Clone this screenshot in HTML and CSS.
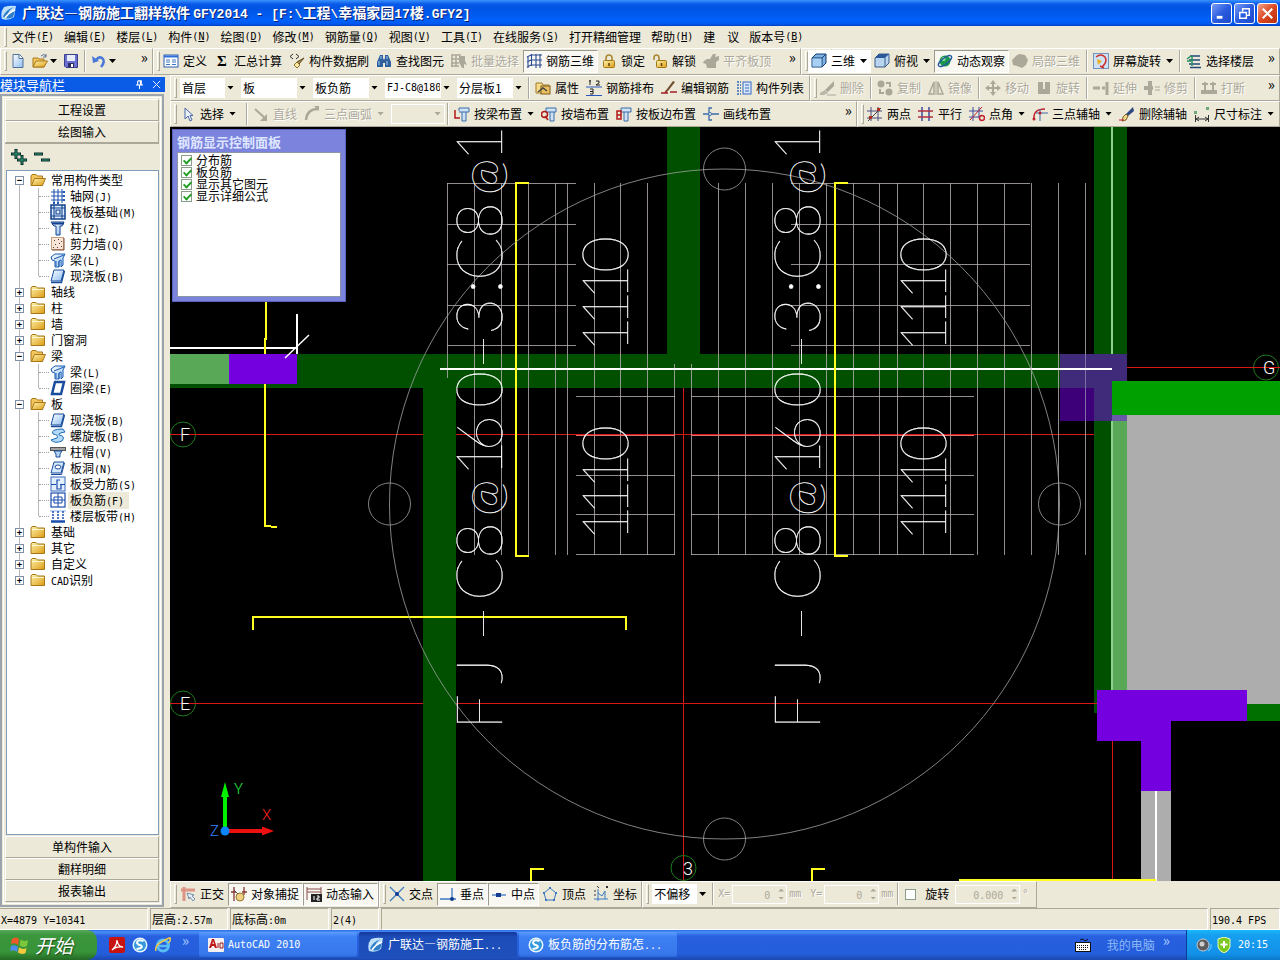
FILE: index.html
```html
<!DOCTYPE html>
<html lang="zh-CN">
<head>
<meta charset="utf-8">
<title>广联达—钢筋施工翻样软件 GFY2014</title>
<link rel="stylesheet" href="styles.css">
</head>
<body>
<svg class="sprite" aria-hidden="true">
  <defs>
    <linearGradient id="gold" x1="0" y1="0" x2="1" y2="1"><stop offset="0" stop-color="#fff3b0"/><stop offset="1" stop-color="#dc9c12"/></linearGradient>
    <linearGradient id="ice" x1="0" y1="0" x2="1" y2="1"><stop offset="0" stop-color="#ffffff"/><stop offset="1" stop-color="#8dbcf0"/></linearGradient>
  </defs>
  <symbol id="logo" viewBox="0 0 16 16"><path d="M3 2Q9 0 15 1L13 12Q8 16 1 14Q-1 7 3 2Z" fill="#bfe0f8"/><path d="M2 12Q4 5 13 2Q8 5 7 9L14 6L12 12Q7 15 2 12Z" fill="#2e7fc8"/><path d="M4 13Q7 8 14 5" fill="none" stroke="#fff" stroke-width="1.6"/></symbol>
  <symbol id="new" viewBox="0 0 16 16"><path d="M3 1.500H9.500L13 5V14.500H3Z" fill="url(#ice)" stroke="#51719c"/><path d="M9 2V5.500H13" fill="#fff" stroke="#51719c"/></symbol>
  <symbol id="open" viewBox="0 0 16 16"><path d="M1 5H6L7 6H12V14H1Z" fill="#f5c75b" stroke="#a8781c"/><path d="M1 14L4 8H15.500L12 14Z" fill="url(#gold)" stroke="#a8781c"/><path d="M9 3Q12 0 14 3M14 1V4H11" fill="none" stroke="#5a6f8c"/></symbol>
  <symbol id="save" viewBox="0 0 16 16"><path d="M1.500 1.500H14.500V14.500H3L1.500 13Z" fill="#6a6fd0" stroke="#3a3c8c"/><rect x="4" y="2" width="8" height="6" fill="#e6ecfa"/><rect x="5" y="10" width="6" height="4" fill="#2b2c60"/><rect x="8" y="11" width="2" height="3" fill="#fff"/></symbol>
  <symbol id="undo" viewBox="0 0 16 16"><path d="M5 7Q8 3 11 5Q15 8 10 14" fill="none" stroke="#4a78d8" stroke-width="2.500"/><path d="M1 3L2 10L8 8Z" fill="#4a78d8"/></symbol>
  <symbol id="define" viewBox="0 0 16 16"><rect x="1" y="2" width="14" height="12" fill="#fff" stroke="#2f5fae"/><path d="M1 3.500H15" stroke="#2f6fd8" stroke-width="2"/><path d="M3 7H7M3 9H7M3 11.500H7M9 7H13M9 9H13M9 11.500H13" stroke="#3d78c8"/></symbol>
  <symbol id="brush" viewBox="0 0 16 16"><path d="M4 1L1 3.500L4 6M7 1L10 3.500L7 6" fill="none" stroke="#333"/><path d="M15 5L10 11L8 9Z" fill="#b09050" stroke="#5c4820"/><path d="M8 9L11 12L8 15L5 12Z" fill="#f8e8a0" stroke="#8c7028"/></symbol>
  <symbol id="find" viewBox="0 0 16 16"><path d="M4 2H7V5L8 7L9 5V2H12L15 9V14H9V10H7V14H1V9Z" fill="#2f5f9c"/><path d="M3 8V12M11 8V12M5 3V6M11 3V6" stroke="#a8d0f4"/></symbol>
  <symbol id="batch" viewBox="0 0 16 16"><path d="M0 2H10M0 6H8M0 10H8M0 13H8M1 2V14M5 2V14" fill="none" stroke="#aca899" stroke-width="1.500"/><path d="M8 3H14V8L16 12L13 11V15H11L8 9Z" fill="#aca899"/></symbol>
  <symbol id="mesh" viewBox="0 0 16 16"><path d="M1 4L5 2H16M1 9L5 7H16M1 14L5 12H16M2 3V15M5.500 1V13M10 1V15M14 1V15" fill="none" stroke="#2a4c90" stroke-width="1.100"/></symbol>
  <symbol id="lock" viewBox="0 0 16 16"><path d="M5 8V5Q5 2 8 2T11 5V8" fill="none" stroke="#a88830" stroke-width="1.600"/><rect x="2.500" y="7.500" width="11" height="7" rx="1" fill="url(#gold)" stroke="#a07818"/><path d="M8 10V13" stroke="#604000" stroke-width="1.500"/></symbol>
  <symbol id="unlock" viewBox="0 0 16 16"><path d="M2 7V5Q2 2 4.500 2T7 5V8" fill="none" stroke="#a88830" stroke-width="1.600"/><rect x="4.500" y="7.500" width="10" height="7" rx="1" fill="url(#gold)" stroke="#a07818"/><path d="M9.500 10V13" stroke="#604000" stroke-width="1.500"/></symbol>
  <symbol id="blob" viewBox="0 0 16 16"><path d="M1 8L4 6L7 6L10 1H13L12 4L16 3V7L13 9V15H4L3 11L0 10Z" fill="#aca899"/></symbol>
  <symbol id="cube" viewBox="0 0 16 16"><path d="M1 5L5 1H15V10L11 14H1Z" fill="#7fb2e4" stroke="#173c70"/><path d="M1 5H11V14M11 5L15 1" fill="none" stroke="#173c70"/><rect x="1.500" y="5.500" width="9" height="8" fill="#a8d0f4"/></symbol>
  <symbol id="topview" viewBox="0 0 16 16"><path d="M1 5L5 1H15V10L11 14H1Z" fill="#b8d4ee" stroke="#3c5c88"/><path d="M1 5L5 1H15L11 5Z" fill="#2a5898"/><path d="M11 5V14" stroke="#3c5c88"/></symbol>
  <symbol id="orbit" viewBox="0 0 16 16"><circle cx="8" cy="8" r="5.500" fill="#1b9a4a"/><circle cx="6.500" cy="6" r="2" fill="#9be8b0"/><ellipse cx="8" cy="8" rx="8" ry="3" fill="none" stroke="#265c9c" stroke-width="1.300" transform="rotate(-38 8 8)"/></symbol>
  <symbol id="part" viewBox="0 0 16 16"><path d="M5 2L8 1L13 2L16 7L14 12L10 15L5 13L1 12L0 7Z" fill="#aca899"/></symbol>
  <symbol id="screen" viewBox="0 0 16 16"><rect x=".5" y=".5" width="15" height="15" fill="#cfe2f5" stroke="#6f94c0"/><path d="M3 4Q8 0 12 4Q15 9 9 14L7 13M9 14L11 15" fill="none" stroke="#d03030" stroke-width="1.500"/><path d="M4 6L9 8L5 12Z" fill="#e8b020"/></symbol>
  <symbol id="floors" viewBox="0 0 16 16"><path d="M4 3H14M3 7H14M3 11H14M4 14.500H15" stroke="#24487c" stroke-width="1.600"/><path d="M6 3V13M1 6L5 3M1 8H5" stroke="#249060" stroke-width="1.500"/></symbol>
  <symbol id="props" viewBox="0 0 16 16"><path d="M1 3H7L8 5H14V13H1Z" fill="#f7dd8a" stroke="#a07828"/><rect x="6" y="6" width="9" height="8" fill="#e9c060" stroke="#805a18"/><path d="M3 12L8 8L12 11" fill="none" stroke="#444" stroke-width="1.500"/></symbol>
  <symbol id="arrange" viewBox="0 0 16 16"><path d="M4 0V5M3 1H5M10 1H13V3L10 5H14M4 9H7V14H4M4 11.500H7" fill="none" stroke="#222"/><path d="M0 7H16M0 15.500H16" stroke="#2b58c0" stroke-width="1.200"/></symbol>
  <symbol id="editbar" viewBox="0 0 16 16"><path d="M0 13H7M9 12H16M4 13L6 10" stroke="#a02020" fill="none" stroke-width="1.500"/><path d="M14 2L7 11L5 12L6 9L12 1Z" fill="#705030"/></symbol>
  <symbol id="list" viewBox="0 0 16 16"><path d="M1 2H5M1 5H5M1 8H5M1 11H5M1 14H5" stroke="#3468c0" stroke-dasharray="2 1" stroke-width="1.500"/><rect x="7" y="2" width="8" height="12" fill="#dbe8fa" stroke="#3468c0"/><path d="M9 5H13M9 8H13M9 11H13" stroke="#3468c0"/></symbol>
  <symbol id="erase" viewBox="0 0 16 16"><path d="M14 1V6L8 12L5 10Z" fill="#aca899"/><path d="M5 10L8 13L4 15H0V13Z" fill="#bab6a8"/><path d="M7 15H16" stroke="#aca899"/></symbol>
  <symbol id="copy" viewBox="0 0 16 16"><circle cx="4" cy="4" r="3.500" fill="#aca899"/><circle cx="12" cy="12" r="3.500" fill="#aca899"/><path d="M9 3H13V7M3 9V13H7" fill="none" stroke="#aca899" stroke-width="2"/></symbol>
  <symbol id="mirror" viewBox="0 0 16 16"><path d="M6 2V14H1ZM10 2V14H15Z" fill="none" stroke="#aca899" stroke-width="1.500"/><path d="M8 1V15" stroke="#aca899"/></symbol>
  <symbol id="move" viewBox="0 0 16 16"><path d="M8 0L11 4H5ZM8 16L11 12H5ZM0 8L4 5V11ZM16 8L12 5V11Z" fill="#aca899"/><path d="M8 3V13M3 8H13" stroke="#aca899" stroke-width="2"/></symbol>
  <symbol id="turn" viewBox="0 0 16 16"><path d="M2 2H7V9H9V2H14V14H2Z" fill="#aca899"/></symbol>
  <symbol id="extend" viewBox="0 0 16 16"><path d="M0 8H7M9 8H12" stroke="#aca899" stroke-width="3"/><path d="M14 2V15" stroke="#aca899" stroke-width="3"/></symbol>
  <symbol id="trim" viewBox="0 0 16 16"><path d="M6 1V15M0 8H9" stroke="#aca899" stroke-width="4"/><path d="M11 7H16M11 10H16" stroke="#aca899"/></symbol>
  <symbol id="break" viewBox="0 0 16 16"><path d="M1 4H7M9 4H15M4 2V10M12 2V10" stroke="#aca899" stroke-width="2"/><path d="M0 12H16" stroke="#aca899" stroke-width="4"/></symbol>
  <symbol id="cursor" viewBox="0 0 16 16"><path d="M5 2V13L8 10L10 15L12 14L10 9.500H13Z" fill="#e8f0fc" stroke="#4a68a8"/></symbol>
  <symbol id="line" viewBox="0 0 16 16"><path d="M2 3L13 13" stroke="#aca899" stroke-width="2"/><path d="M14 8V15H7Z" fill="#aca899"/></symbol>
  <symbol id="arc" viewBox="0 0 16 16"><path d="M2 14Q3 3 14 3" fill="none" stroke="#aca899" stroke-width="2.500"/><path d="M10 0H15V5Z" fill="#aca899"/></symbol>
  <symbol id="beamL" viewBox="0 0 16 16"><path d="M1 4V12H6" fill="none" stroke="#b01818" stroke-width="1.500"/><path d="M5 5V2H15V6H5M8 6V15H12V6" fill="#cfe2f5" stroke="#3a6ca8"/></symbol>
  <symbol id="wallQ" viewBox="0 0 16 16"><path d="M5 5V2H15V6H5M9 6V15H13V6" fill="#cfe2f5" stroke="#3a6ca8"/><circle cx="3.500" cy="8.500" r="3" fill="none" stroke="#b01818" stroke-width="1.500"/><path d="M4 10L7 14" stroke="#b01818" stroke-width="1.500"/></symbol>
  <symbol id="slabB" viewBox="0 0 16 16"><path d="M5 5V2H15V6H5M8 6V15H12V6" fill="#cfe2f5" stroke="#3a6ca8"/><path d="M1 5V13H5V5ZM1 9H5" fill="none" stroke="#b01818" stroke-width="1.500"/></symbol>
  <symbol id="drawline" viewBox="0 0 16 16"><path d="M0 8H5M8 8H16M9 2H6V14H9" fill="none" stroke="#3a6ca8" stroke-width="1.300"/><circle cx="7" cy="8" r="1.500" fill="#fff" stroke="#3a6ca8"/></symbol>
  <symbol id="twopt" viewBox="0 0 16 16"><path d="M4 1V15M11 1V15M0 5H15M0 12H15" stroke="#4a4a80"/><path d="M1 15L14 2" stroke="#444"/><path d="M2 13h3v-3h-3zM10 5h3v-3h-3z" fill="#b03020"/></symbol>
  <symbol id="parallel" viewBox="0 0 16 16"><path d="M4 1V15M11 1V15" stroke="#3a4ca0" stroke-width="1.500"/><path d="M0 5H15M0 11H15" stroke="#b03040" stroke-width="1.500"/></symbol>
  <symbol id="ptang" viewBox="0 0 16 16"><path d="M4 1V15M10 1V12M0 5H14M0 11H10" stroke="#3a4ca0"/><path d="M1 14L13 1" stroke="#c02030"/><circle cx="13" cy="12" r="2.500" fill="none" stroke="#c02030" stroke-width="1.500"/></symbol>
  <symbol id="threept" viewBox="0 0 16 16"><path d="M2 13Q1 3 13 3" fill="none" stroke="#c02030" stroke-width="1.500"/><path d="M4 7H16M8 3V15" stroke="#3a6ca8"/><circle cx="2" cy="13" r="1.500" fill="#c02030"/><circle cx="8" cy="7" r="1.500" fill="#c02030"/></symbol>
  <symbol id="delaxis" viewBox="0 0 16 16"><path d="M14 1L15 5L9 10L7 8Z" fill="#304880"/><path d="M7 8L9 10L7 14L3 15L4 11Z" fill="#f0d890" stroke="#806020"/><path d="M0 14H5" stroke="#c02030"/></symbol>
  <symbol id="dim" viewBox="0 0 16 16"><path d="M1.500 9V16M14.500 9V16M2 13H14M5 11L2 13L5 15M11 11L14 13L11 15" fill="none" stroke="#333"/><path d="M0 5h3v3h-3zM12 1h3v3h-3z" fill="#6fa878"/></symbol>
  <symbol id="folder" viewBox="0 0 16 16"><path d="M1 4L2 2.500H6L7.500 4H14.500V13.500H1Z" fill="url(#gold)" stroke="#a8771a"/><path d="M2 5.500H14" stroke="#fff8cc"/></symbol>
  <symbol id="folderopen" viewBox="0 0 16 16"><path d="M1 4L2 2.500H6L7.500 4H12.500V13.500H1Z" fill="#f2c65c" stroke="#a8771a"/><path d="M1.500 13.500L4.500 6.500H15.500L12.500 13.500Z" fill="url(#gold)" stroke="#a8771a"/></symbol>
  <symbol id="axisnet" viewBox="0 0 16 16"><path d="M4 1V15M8 1V15M12 1V15M1 4H15M1 8H15M1 12H15" stroke="#2458b0" stroke-width="1.100"/><path d="M13 3h2v2h-2zM13 7h2v2h-2zM13 11h2v2h-2zM3 14h2v2h-2zM7 14h2v2h-2z" fill="#2458b0"/></symbol>
  <symbol id="raft" viewBox="0 0 16 16"><rect x="1" y="1" width="14" height="14" fill="#dcebfc" stroke="#12408c" stroke-width="1.500"/><path d="M4 4H12V12H4ZM6 6H10V10H6ZM1 4H4M12 4H15M1 12H4M12 12H15M4 1V4M12 1V4M4 12V15M12 12V15" fill="none" stroke="#12408c" stroke-width="1.100"/></symbol>
  <symbol id="column" viewBox="0 0 16 16"><path d="M1 2H14L12 6H10V15H6V6H4Z" fill="url(#ice)" stroke="#12408c"/><path d="M2 3.500H14" stroke="#12408c" stroke-width="2"/></symbol>
  <symbol id="shearwall" viewBox="0 0 16 16"><rect x="1.500" y="1.500" width="12" height="12" fill="#f8e6da" stroke="#c8a080"/><path d="M14 2V14H2" fill="none" stroke="#80503c"/><path d="M4 4h1v1h-1zM8 3h1v1h-1zM11 5h1v1h-1zM5 8h1v1h-1zM9 7h1v1h-1zM7 11h1v1h-1zM11 10h1v1h-1zM3 11h1v1h-1z" fill="#603820"/></symbol>
  <symbol id="beam" viewBox="0 0 16 16"><path d="M1 5L5 2H15L13 6V13L11 15V8L9 9V15H5V9L2 8Z" fill="url(#ice)" stroke="#1a5cb0"/><path d="M4 7L14 3M9 9V15M6 9V14" fill="none" stroke="#1a5cb0"/></symbol>
  <symbol id="slab" viewBox="0 0 16 16"><path d="M4 2H14L11 13H1Z" fill="url(#ice)" stroke="#1a4c9c"/><path d="M1 14.500H11.500L14.500 3" fill="none" stroke="#1a4c9c" stroke-width="1.300"/></symbol>
  <symbol id="ringbeam" viewBox="0 0 16 16"><path d="M5 2H14L11 14H2Z" fill="#fff" stroke="#1a4c9c" stroke-width="2.500"/></symbol>
  <symbol id="spiral" viewBox="0 0 16 16"><path d="M13 1Q0 1 3 6Q9 7 7 10L1 12Q5 16 12 13Q16 8 9 7Q8 5 15 4Z" fill="#b4d8f6" stroke="#1a6cb8"/></symbol>
  <symbol id="cap" viewBox="0 0 16 16"><rect x=".5" y="3.500" width="15" height="3" fill="#a0a0a0" stroke="#555"/><path d="M4 7H12L10 10V13H6V10Z" fill="#b8d6f6" stroke="#1a4c9c"/></symbol>
  <symbol id="hole" viewBox="0 0 16 16"><path d="M4 2H14L11 13H1Z" fill="#d4e8fc" stroke="#1a4c9c"/><path d="M1 14.500H11.500L14.500 3" fill="none" stroke="#1a4c9c"/><ellipse cx="8" cy="7" rx="3" ry="2" fill="#fff" stroke="#1a4c9c"/></symbol>
  <symbol id="mainbar" viewBox="0 0 16 16"><rect x="1" y="1" width="14" height="14" fill="#e2effd" stroke="#3a6cbc"/><path d="M1 8.500H6M10 8.500H15M10 4H7V13H11V8" fill="none" stroke="#1a4cac" stroke-width="1.200"/></symbol>
  <symbol id="negbar" viewBox="0 0 16 16"><rect x="1" y="1" width="14" height="14" fill="#fff" stroke="#1a4cac" stroke-width="1.200"/><path d="M4 5H12M4 11H12M4 5V11M12 5V11M8 1V15M1 8H15" fill="none" stroke="#1a4cac"/></symbol>
  <symbol id="strip" viewBox="0 0 16 16"><path d="M1 13.500H15" stroke="#1a4cac" stroke-width="2.500"/><path d="M0 3H16" stroke="#8db4ec"/><path d="M3 3V12M8 3V12M13 3V12" stroke="#1a4cac" stroke-dasharray="2 1" stroke-width="1.500"/></symbol>
  <symbol id="ortho" viewBox="0 0 16 16"><path d="M4 1V15M1 4H15" stroke="#dc9484" stroke-width="3"/><path d="M7 7L9 13L10 11L13 15L15 13L12 10L14 9Z" fill="#e8f0fa" stroke="#7890a8"/></symbol>
  <symbol id="snap" viewBox="0 0 16 16"><path d="M3 1V15M13 1V9M0 6H5M11 6H16" stroke="#883830" stroke-width="1.300"/><circle cx="9" cy="11" r="4" fill="#eed080" stroke="#987830"/><path d="M3 4L7 8" stroke="#555"/></symbol>
  <symbol id="dyn" viewBox="0 0 16 16"><path d="M1 1V14M15 1V8M1 3H15M1 6H15" stroke="#884c48"/><rect x="5" y="8" width="11" height="8" fill="#222"/><path d="M8 10V14M11 10H13V12H11V14H14" fill="none" stroke="#fff"/></symbol>
  <symbol id="cross" viewBox="0 0 16 16"><path d="M1 1L15 15M15 1L1 15" stroke="#3b78c0" stroke-width="1.300"/><circle cx="8" cy="8" r="2" fill="#123c90"/></symbol>
  <symbol id="perp" viewBox="0 0 16 16"><path d="M0 13H16M12 2V13" stroke="#3b78c0" stroke-width="1.300"/><circle cx="12" cy="13" r="2" fill="#123c90"/></symbol>
  <symbol id="mid" viewBox="0 0 16 16"><path d="M1 9H15" stroke="#3b78c0" stroke-width="1.300"/><rect x="5" y="7" width="5" height="4" fill="#123c90"/></symbol>
  <symbol id="vertex" viewBox="0 0 16 16"><path d="M8 2L14 7L12 14H4L2 7Z" fill="none" stroke="#3b78c0"/><path d="M7 1h2v2h-2zM1 6h2v2h-2zM13 6h2v2h-2zM3 13h2v2h-2zM11 13h2v2h-2z" fill="#3b78c0"/></symbol>
  <symbol id="coord" viewBox="0 0 16 16"><path d="M5 3V15M1 13H15M5 7L9 10L12 5M12 5V13" fill="none" stroke="#3b78c0"/><path d="M4 0L6 2M13 0L15 2M15 0L13 2M1 5H3M1 9H3" stroke="#333"/></symbol>
  <symbol id="pdf" viewBox="0 0 16 16"><rect width="16" height="16" rx="2" fill="#c81410"/><path d="M3 13Q8 9 8 3Q9 10 14 10Q7 9 3 13Z" fill="none" stroke="#fff" stroke-width="1.300"/></symbol>
  <symbol id="sogou" viewBox="0 0 16 16"><circle cx="8" cy="8" r="7.500" fill="#e8f6ff"/><circle cx="8" cy="8" r="6" fill="#3498dc"/><path d="M11.500 4Q5 2 5 6Q6 8 9 8.500Q12 11 4.500 12" fill="none" stroke="#fff" stroke-width="2"/></symbol>
  <symbol id="ie" viewBox="0 0 16 16"><circle cx="8" cy="8.500" r="5.500" fill="none" stroke="#58bdf4" stroke-width="3"/><path d="M4 9H14" stroke="#58bdf4" stroke-width="2.500"/><path d="M1 14Q-1 9 8 4T15 2Q16 4 13 6" fill="none" stroke="#f2c84a" stroke-width="1.500"/></symbol>
  <symbol id="acad" viewBox="0 0 16 16"><rect y="1" width="16" height="14" rx="1" fill="#f6f0f0"/><path d="M1 11L4 2H6L9 11H7L6 9H4L3 11ZM4.500 7H6L5 4Z" fill="#c01818"/><path d="M10 6V11M12 6H15V11H12Z" fill="none" stroke="#a01818"/></symbol>
  <symbol id="flag" viewBox="0 0 20 20"><path d="M2 4Q6 1 9 4L8 10Q5 7 1 9Z" fill="#f0582c"/><path d="M10.500 4.500Q14 7 18 5L17 11Q13 13 9.500 10.500Z" fill="#7cc83c"/><path d="M1 11Q5 9 8 12L7 17Q4 14 0 16Z" fill="#4f8cf0"/><path d="M9 12.500Q13 15 16.500 13L15.500 18Q12 20 8 17.500Z" fill="#fbc93c"/></symbol>
  <symbol id="kbd" viewBox="0 0 16 16"><path d="M5 3Q7 1 9 3T13 2" fill="none" stroke="#111"/><rect x=".5" y="5.500" width="15" height="9" fill="#fff" stroke="#111"/><path d="M2 8.500H14M2 10.500H14M4 12.500H12" stroke="#111" stroke-dasharray="1 1"/></symbol>
  <symbol id="speaker" viewBox="0 0 16 16"><circle cx="7" cy="8" r="6" fill="#5c5c60" stroke="#c8c8c8"/><circle cx="6" cy="7" r="2.500" fill="#d0d0d0"/><path d="M12 14Q16 11 15 7" fill="none" stroke="#4fb8ff" stroke-width="1.500"/></symbol>
  <symbol id="shield" viewBox="0 0 16 16"><path d="M8 0L14 2V10Q13 14 8 16Q3 14 2 10V2Z" fill="#7cc820" stroke="#e8f8c0"/><path d="M8 4V11M4.500 7.500H11.500" stroke="#fff" stroke-width="2"/></symbol>
</svg>

<header class="titlebar">
  <svg class="i"><use href="#logo"/></svg>
  <h1>广联达—钢筋施工翻样软件 <span class="tm">GFY2014 - [F:\</span>工程<span class="tm">\</span>幸福家园<span class="tm">17</span>楼<span class="tm">.GFY2]</span></h1>
  <div class="winbtns">
    <button class="wb" aria-label="最小化"><svg viewBox="0 0 20 20"><path d="M5 14H11" stroke="#fff" stroke-width="3"/></svg></button>
    <button class="wb" aria-label="还原"><svg viewBox="0 0 20 20"><path d="M8 8V5H15V12H12M5 9H12V15H5Z" fill="none" stroke="#fff" stroke-width="1.500"/></svg></button>
    <button class="wb close" aria-label="关闭"><svg viewBox="0 0 20 20"><path d="M5 5L15 15M15 5L5 15" stroke="#fff" stroke-width="2.200"/></svg></button>
  </div>
</header>

<nav class="menubar">
  <span class="grip"></span>
  <button>文件<span class="k">(<u>F</u>)</span></button><button>编辑<span class="k">(<u>E</u>)</span></button><button>楼层<span class="k">(<u>L</u>)</span></button><button>构件<span class="k">(<u>N</u>)</span></button><button>绘图<span class="k">(<u>D</u>)</span></button><button>修改<span class="k">(<u>M</u>)</span></button><button>钢筋量<span class="k">(<u>Q</u>)</span></button><button>视图<span class="k">(<u>V</u>)</span></button><button>工具<span class="k">(<u>T</u>)</span></button><button>在线服务<span class="k">(<u>S</u>)</span></button><button>打开精细管理</button><button>帮助<span class="k">(<u>H</u>)</span></button><button>建　议</button><button>版本号<span class="k">(<u>B</u>)</span></button>
</nav>

<div class="bars">
  <div class="bar bar-file">
    <span class="grip"></span>
    <button class="tb" aria-label="新建"><svg class="i"><use href="#new"/></svg></button>
    <button class="tb" aria-label="打开"><svg class="i"><use href="#open"/></svg><i class="caret"></i></button>
    <button class="tb" aria-label="保存"><svg class="i"><use href="#save"/></svg></button>
    <span class="sep"></span>
    <button class="tb" aria-label="撤销"><svg class="i"><use href="#undo"/></svg><i class="caret"></i></button>
    <button class="more" aria-label="更多">»</button>
  </div>
  <div class="bar bar-main">
    <span class="grip"></span>
    <button class="tb"><svg class="i"><use href="#define"/></svg>定义</button>
    <button class="tb"><span class="i sigma">Σ</span>汇总计算</button>
    <button class="tb"><svg class="i"><use href="#brush"/></svg>构件数据刷</button>
    <button class="tb"><svg class="i"><use href="#find"/></svg>查找图元</button>
    <button class="tb" disabled><svg class="i"><use href="#batch"/></svg>批量选择</button>
    <button class="tb on"><svg class="i"><use href="#mesh"/></svg>钢筋三维</button>
    <button class="tb"><svg class="i"><use href="#lock"/></svg>锁定</button>
    <button class="tb"><svg class="i"><use href="#unlock"/></svg>解锁</button>
    <button class="tb" disabled><svg class="i"><use href="#blob"/></svg>平齐板顶</button>
    <button class="more" aria-label="更多">»</button>
  </div>
  <div class="bar bar-rest">
    <span class="grip"></span>
    <button class="tb view"><svg class="i"><use href="#cube"/></svg>三维<i class="caret"></i></button>
    <button class="tb"><svg class="i"><use href="#topview"/></svg>俯视<i class="caret"></i></button>
    <button class="tb on"><svg class="i"><use href="#orbit"/></svg>动态观察</button>
    <button class="tb" disabled><svg class="i"><use href="#part"/></svg>局部三维</button>
    <span class="sep"></span>
    <button class="tb"><svg class="i"><use href="#screen"/></svg>屏幕旋转<i class="caret"></i></button>
    <span class="sep"></span>
    <button class="tb"><svg class="i"><use href="#floors"/></svg>选择楼层</button>
    <button class="more" aria-label="更多">»</button>
  </div>
</div>

<div class="middle">
  <aside class="side">
    <div class="side-head"><h2>模块导航栏</h2>
      <button aria-label="固定"><svg viewBox="0 0 10 10"><path d="M3 1H7V5M3 1V5M6 1V5M1 5.500H9M5 6V10" fill="none" stroke="#fff" stroke-width="1.200"/></svg></button>
      <button aria-label="关闭"><svg viewBox="0 0 10 10"><path d="M1 1L9 9M9 1L1 9" stroke="#fff"/></svg></button>
    </div>
    <div class="side-body">
      <button class="tab">工程设置</button>
      <button class="tab">绘图输入</button>
      <div class="side-tools">
        <button aria-label="全部展开"><svg viewBox="0 0 16 16"><path d="M5 0V10M0 5H10M11 6V16M6 11H16" stroke="#0c2c28" stroke-width="3"/><path d="M5 1V9M1 5H9M11 7V15M7 11H15" stroke="#2c9c7c"/></svg></button>
        <button aria-label="全部折叠"><svg viewBox="0 0 16 16"><path d="M0 5H9M7 11H16" stroke="#0c2c28" stroke-width="3"/><path d="M1 5H8M8 11H15" stroke="#2c9c7c"/></svg></button>
      </div>
      <ul class="tree">
        <li><span class="row"><b class="ex">−</b><svg class="i"><use href="#folderopen"/></svg>常用构件类型</span>
          <ul>
            <li><svg class="i"><use href="#axisnet"/></svg><span>轴网<span class="k">(J)</span></span></li>
            <li><svg class="i"><use href="#raft"/></svg><span>筏板基础<span class="k">(M)</span></span></li>
            <li><svg class="i"><use href="#column"/></svg><span>柱<span class="k">(Z)</span></span></li>
            <li><svg class="i"><use href="#shearwall"/></svg><span>剪力墙<span class="k">(Q)</span></span></li>
            <li><svg class="i"><use href="#beam"/></svg><span>梁<span class="k">(L)</span></span></li>
            <li><svg class="i"><use href="#slab"/></svg><span>现浇板<span class="k">(B)</span></span></li>
          </ul></li>
        <li><span class="row"><b class="ex">+</b><svg class="i"><use href="#folder"/></svg>轴线</span></li>
        <li><span class="row"><b class="ex">+</b><svg class="i"><use href="#folder"/></svg>柱</span></li>
        <li><span class="row"><b class="ex">+</b><svg class="i"><use href="#folder"/></svg>墙</span></li>
        <li><span class="row"><b class="ex">+</b><svg class="i"><use href="#folder"/></svg>门窗洞</span></li>
        <li><span class="row"><b class="ex">−</b><svg class="i"><use href="#folderopen"/></svg>梁</span>
          <ul>
            <li><svg class="i"><use href="#beam"/></svg><span>梁<span class="k">(L)</span></span></li>
            <li><svg class="i"><use href="#ringbeam"/></svg><span>圈梁<span class="k">(E)</span></span></li>
          </ul></li>
        <li><span class="row"><b class="ex">−</b><svg class="i"><use href="#folderopen"/></svg>板</span>
          <ul>
            <li><svg class="i"><use href="#slab"/></svg><span>现浇板<span class="k">(B)</span></span></li>
            <li><svg class="i"><use href="#spiral"/></svg><span>螺旋板<span class="k">(B)</span></span></li>
            <li><svg class="i"><use href="#cap"/></svg><span>柱帽<span class="k">(V)</span></span></li>
            <li><svg class="i"><use href="#hole"/></svg><span>板洞<span class="k">(N)</span></span></li>
            <li><svg class="i"><use href="#mainbar"/></svg><span>板受力筋<span class="k">(S)</span></span></li>
            <li><svg class="i"><use href="#negbar"/></svg><span class="sel">板负筋<span class="k">(F)</span></span></li>
            <li><svg class="i"><use href="#strip"/></svg><span>楼层板带<span class="k">(H)</span></span></li>
          </ul></li>
        <li><span class="row"><b class="ex">+</b><svg class="i"><use href="#folder"/></svg>基础</span></li>
        <li><span class="row"><b class="ex">+</b><svg class="i"><use href="#folder"/></svg>其它</span></li>
        <li><span class="row"><b class="ex">+</b><svg class="i"><use href="#folder"/></svg>自定义</span></li>
        <li><span class="row"><b class="ex">+</b><svg class="i"><use href="#folder"/></svg><span><span class="k">CAD</span>识别</span></span></li>
      </ul>
      <button class="tab">单构件输入</button>
      <button class="tab">翻样明细</button>
      <button class="tab">报表输出</button>
    </div>
  </aside>

  <main class="work">
    <div class="bars">
      <div class="bar bar-comp">
        <span class="grip"></span>
        <span class="combo c-s"><select aria-label="楼层"><option>首层</option></select></span>
        <span class="combo"><select aria-label="类别"><option>板</option></select></span>
        <span class="combo"><select aria-label="构件类型"><option>板负筋</option></select></span>
        <span class="combo mono"><select aria-label="构件"><option>FJ-C8@180</option></select></span>
        <span class="combo"><select aria-label="分层"><option>分层板1</option></select></span>
        <span class="sep"></span>
        <button class="tb"><svg class="i"><use href="#props"/></svg>属性</button>
        <button class="tb"><svg class="i"><use href="#arrange"/></svg>钢筋排布</button>
        <button class="tb"><svg class="i"><use href="#editbar"/></svg>编辑钢筋</button>
        <button class="tb"><svg class="i"><use href="#list"/></svg>构件列表</button>
      </div>
      <div class="bar bar-rest">
        <span class="grip"></span>
        <button class="tb" disabled><svg class="i"><use href="#erase"/></svg>删除</button>
        <span class="sep"></span>
        <button class="tb" disabled><svg class="i"><use href="#copy"/></svg>复制</button>
        <button class="tb" disabled><svg class="i"><use href="#mirror"/></svg>镜像</button>
        <span class="sep"></span>
        <button class="tb" disabled><svg class="i"><use href="#move"/></svg>移动</button>
        <button class="tb" disabled><svg class="i"><use href="#turn"/></svg>旋转</button>
        <span class="sep"></span>
        <button class="tb" disabled><svg class="i"><use href="#extend"/></svg>延伸</button>
        <button class="tb" disabled><svg class="i"><use href="#trim"/></svg>修剪</button>
        <span class="sep"></span>
        <button class="tb" disabled><svg class="i"><use href="#break"/></svg>打断</button>
        <button class="more" aria-label="更多">»</button>
      </div>
    </div>
    <div class="bars">
      <div class="bar bar-draw">
        <span class="grip"></span>
        <button class="tb pick"><svg class="i"><use href="#cursor"/></svg>选择<i class="caret"></i></button>
        <span class="sep"></span>
        <button class="tb" disabled><svg class="i"><use href="#line"/></svg>直线</button>
        <button class="tb" disabled><svg class="i"><use href="#arc"/></svg>三点画弧<i class="caret"></i></button>
        <span class="combo c-s off"><select aria-label="画弧方式" disabled><option></option></select></span>
        <span class="sep"></span>
        <button class="tb"><svg class="i"><use href="#beamL"/></svg>按梁布置<i class="caret"></i></button>
        <button class="tb"><svg class="i"><use href="#wallQ"/></svg>按墙布置</button>
        <button class="tb"><svg class="i"><use href="#slabB"/></svg>按板边布置</button>
        <button class="tb"><svg class="i"><use href="#drawline"/></svg>画线布置</button>
        <button class="more" aria-label="更多">»</button>
      </div>
      <div class="bar bar-rest">
        <span class="grip"></span>
        <button class="tb"><svg class="i"><use href="#twopt"/></svg>两点</button>
        <button class="tb"><svg class="i"><use href="#parallel"/></svg>平行</button>
        <button class="tb"><svg class="i"><use href="#ptang"/></svg>点角<i class="caret"></i></button>
        <button class="tb"><svg class="i"><use href="#threept"/></svg>三点辅轴<i class="caret"></i></button>
        <button class="tb"><svg class="i"><use href="#delaxis"/></svg>删除辅轴</button>
        <button class="tb"><svg class="i"><use href="#dim"/></svg>尺寸标注<i class="caret"></i></button>
      </div>
    </div>

    <section class="canvas">
      <svg class="drawing" viewBox="170 127 1110 754" preserveAspectRatio="xMinYMin slice">
        <g shape-rendering="crispEdges">
          <g fill="#005000">
            <rect x="667" y="127" width="33" height="228"/>
            <rect x="1094" y="127" width="33" height="586"/>
            <rect x="170" y="354" width="957" height="34"/>
          </g>
          <g class="axis">
            <path d="M196 434.500H1094"/><path d="M196 703.500H1097"/><path d="M683.500 388V881"/><path d="M1127 367.500H1280"/><path d="M1112.500 741V881"/>
          </g>
          <rect x="423" y="388" width="33" height="493" fill="#005000"/>
          <path d="M170 354H229V384H170Z" fill="#58a858"/>
          <path d="M229 354H297V384H229Z" fill="#7400e0"/>
          <path class="grid" d="M447.500 183V378M474.500 183V555M501.500 183V555M528.500 183V555M555.500 183V555M567.500 183V555M594.500 183V555M620.500 183V555M647.500 183V555M674.500 364V555M691.500 364V555M718.500 183V555M745.500 183V555M772.500 183V555M799.500 183V555M826.500 183V555M853.500 183V555M879.500 183V555M897.500 183V555M923.500 183V555M950.500 183V555M977.500 183V555M1004.500 183V555M1031.500 183V555M1058.500 183V555M1085.500 183V555"/>
          <path class="grid" d="M447 183.500H576M447 224.500H576M447 264.500H576M447 305.500H576M447 345.500H576M791 183.500H1030M791 224.500H1030M791 264.500H1030M791 305.500H1030M791 345.500H1030M576 396.500H675M576 475.500H675M576 514.500H675M576 554.500H675M691 396.500H974M691 475.500H974M691 514.500H974M691 554.500H974"/>
          <path d="M576 435.500H675M691 435.500H974" stroke="#e07070"/>
          <path d="M1060 354H1127V421H1060Z" fill="#402a7a"/>
          <path d="M1060 388H1094V421H1060Z" fill="#3d0078"/>
          <path d="M1085.500 354V421" stroke="#8070a8"/>
          <path d="M1127 415H1280V704H1127Z" fill="#adadad"/>
          <path d="M1112 415H1127V421H1112Z" fill="#6a58a8"/>
          <path d="M1112 421H1127V690H1112Z" fill="#58a858"/>
          <path d="M1112 381H1280V415H1112Z" fill="#00a000"/>
          <path d="M1112 127V354M1112 421V690" stroke="#90d090" stroke-width="2"/>
          <path d="M1247 704H1280V721H1247Z" fill="#007000"/>
          <path d="M1097 690H1247V721H1171V791H1141V741H1097Z" fill="#7400e0"/>
          <path d="M1141 791H1171V881H1141Z" fill="#adadad"/>
          <path d="M1156 791V881M440 369H1112M170 348H297M297 314V354" stroke="#fff" stroke-width="2"/>
          <path class="rebar" d="M529 183H516V556H529M848 183H835V556H848M266 302V340M265 338V354M265 384V526L277 527M253 630V617H626V630M531 881V869H544M812 881V869H825M959 880H1156"/>
        </g>
        <path d="M285 358L309 335" stroke="#fff" stroke-width="1.500"/>
        <g class="orbit">
          <circle cx="724.500" cy="504" r="335"/>
          <circle cx="724.500" cy="169" r="21"/><circle cx="724.500" cy="839" r="21"/>
          <circle cx="389.500" cy="504" r="21"/><circle cx="1059.500" cy="504" r="21"/>
        </g>
        <g class="bubble">
          <circle cx="183" cy="434.500" r="12.500"/><circle cx="183" cy="703.500" r="12.500"/><circle cx="683.500" cy="868" r="12.500"/><circle cx="1266" cy="367.500" r="12.500"/>
        </g>
        <g class="axis" shape-rendering="crispEdges"><path d="M170 434.500H196"/><path d="M170 703.500H196"/><path d="M1253 367.500H1280"/></g>
        <g class="axname"><text x="180" y="441">F</text><text x="180" y="710">E</text><text x="683" y="875">3</text><text x="1263" y="374">G</text></g>
        <g class="note">
          <text transform="translate(502 728) rotate(-90)" x="-2 44 86 127 169 212 251 276 320 358 393 434 447 489 533 566">FJ–C8<tspan class="at">@</tspan>160–3:C8<tspan class="at">@</tspan>1</text>
          <text transform="translate(820 728) rotate(-90)" x="-2 44 86 127 169 212 251 276 320 358 393 434 447 489 533 566">FJ–C8<tspan class="at">@</tspan>160–3:C8<tspan class="at">@</tspan>1</text>
          <text transform="translate(628 542) rotate(-90)" x="0 26 52 80">1110</text>
          <text transform="translate(628 353) rotate(-90)" x="0 26 52 80">1110</text>
          <text transform="translate(946 542) rotate(-90)" x="0 26 52 80">1110</text>
          <text transform="translate(946 353) rotate(-90)" x="0 26 52 80">1110</text>
        </g>
        <path d="M225 831V792" stroke="#00f000" stroke-width="4"/><path d="M225 782L229 797H221Z" fill="#00f000"/>
        <path d="M225 831H263" stroke="#f01010" stroke-width="4"/><path d="M274 831L262 826.500V835.500Z" fill="#f01010"/>
        <circle cx="225" cy="831" r="4.500" fill="#0c84fc"/>
        <g class="ucs"><text x="234" y="794" fill="#20e840">Y</text><text x="262" y="820" fill="#ff2020">X</text><text x="210" y="836" fill="#2f80ff">Z</text></g>
      </svg>
      <div class="palette">
        <h3>钢筋显示控制面板</h3>
        <div class="palette-body">
          <label><input type="checkbox" checked>分布筋</label>
          <label><input type="checkbox" checked>板负筋</label>
          <label><input type="checkbox" checked>显示其它图元</label>
          <label><input type="checkbox" checked>显示详细公式</label>
        </div>
      </div>
    </section>

    <div class="bars snapbar">
      <div class="bar">
        <span class="grip"></span>
        <button class="tb"><svg class="i"><use href="#ortho"/></svg>正交</button>
        <button class="tb on"><svg class="i"><use href="#snap"/></svg>对象捕捉</button>
        <button class="tb on"><svg class="i"><use href="#dyn"/></svg>动态输入</button>
      </div>
      <div class="bar">
        <span class="grip"></span>
        <button class="tb"><svg class="i"><use href="#cross"/></svg>交点</button>
        <button class="tb on"><svg class="i"><use href="#perp"/></svg>垂点</button>
        <button class="tb on"><svg class="i"><use href="#mid"/></svg>中点</button>
        <button class="tb"><svg class="i"><use href="#vertex"/></svg>顶点</button>
        <button class="tb"><svg class="i"><use href="#coord"/></svg>坐标</button>
      </div>
      <div class="bar">
        <span class="grip"></span>
        <span class="combo c-s"><select aria-label="偏移方式"><option>不偏移</option></select></span>
        <span class="sep"></span>
        <label class="num" for="dx">X=</label><span class="spin"><input id="dx" value="0" disabled></span><span class="num unit">mm</span>
        <label class="num" for="dy">Y=</label><span class="spin"><input id="dy" value="0" disabled></span><span class="num">mm</span>
        <span class="sep"></span>
        <label class="rot"><input type="checkbox">旋转</label>
        <span class="spin wide"><input aria-label="旋转角度" value="0.000" disabled></span><span class="num deg">°</span>
      </div>
    </div>
  </main>
</div>

<footer class="status">
  <span class="s1"><span class="k">X=4879 Y=10341</span></span>
  <span class="s2">层高<span class="k">:2.57m</span></span>
  <span class="s3">底标高<span class="k">:0m</span></span>
  <span class="s4"><span class="k">2(4)</span></span>
  <span class="s5"></span>
  <span class="s6"><span class="k">190.4 FPS</span></span>
</footer>

<div class="taskbar">
  <button class="start"><svg viewBox="0 0 20 20"><use href="#flag"/></svg>开始</button>
  <div class="quick">
    <button aria-label="Adobe Reader"><svg class="i"><use href="#pdf"/></svg></button>
    <button aria-label="搜狗浏览器"><svg class="i"><use href="#sogou"/></svg></button>
    <button aria-label="Internet Explorer"><svg class="i"><use href="#ie"/></svg></button>
    <span class="chev">»</span>
  </div>
  <button class="task"><svg class="i"><use href="#acad"/></svg><span class="k">AutoCAD 2010</span></button>
  <button class="task active"><svg class="i"><use href="#logo"/></svg><span>广联达—钢筋施工<span class="k">...</span></span></button>
  <button class="task"><svg class="i"><use href="#sogou"/></svg><span>板负筋的分布筋怎<span class="k">...</span></span></button>
  <div class="lang"><svg class="i"><use href="#kbd"/></svg><span class="pc">我的电脑</span><span class="chev">»</span></div>
  <div class="tray"><svg class="i"><use href="#speaker"/></svg><svg class="i"><use href="#shield"/></svg><time class="k">20:15</time></div>
</div>
</body>
</html>
```
FILE: styles.css
```css
* { box-sizing: border-box; }
body {
  margin: 0; height: 100vh; display: flex; flex-direction: column; overflow: hidden;
  background: #ece9d8; color: #000;
  font: 12px/16px "Noto Sans CJK SC", sans-serif;
}
button, input, select { font: inherit; color: inherit; margin: 0; }
button { border: 0; padding: 0; background: none; }
h1, h2, h3, ul { margin: 0; padding: 0; font-size: inherit; font-weight: normal; }
ul { list-style: none; }
.sprite { position: absolute; width: 0; height: 0; }
.i { width: 16px; height: 16px; flex: none; display: block; }
.k { font: 10px/16px "DejaVu Sans Mono", monospace; }

.titlebar {
  height: 26px; flex: none; display: flex; align-items: center; gap: 5px; padding: 0 2px 0 1px; color: #fff;
  background: linear-gradient(#3a93ff 0, #0a5ae8 4px, #0054e3 8px, #0060fa 20px, #0058f0 24px, #003cc0 26px);
}
.titlebar h1 { flex: 1; font-size: 14px; font-weight: bold; text-shadow: 1px 1px #0a1e6e; white-space: nowrap; }
.tm { font: bold 13px/16px "Liberation Mono", monospace; }
.winbtns { display: flex; gap: 2px; }
.wb { width: 21px; height: 21px; border: 1px solid #fff; border-radius: 3px; background: linear-gradient(135deg, #7a9cf4, #2a5ce0 50%, #1c48c8); }
.wb svg { display: block; width: 19px; height: 19px; }
.close { background: linear-gradient(135deg, #f0a088, #dc4820 50%, #b83010); }

.menubar { height: 22px; flex: none; display: flex; align-items: center; gap: 10px; padding-left: 4px; }
.menubar button { white-space: nowrap; height: 20px; display: flex; align-items: center; }
.menubar .grip { margin-right: -5px; }

.bars { height: 26px; flex: none; display: flex; }
body > .bars { height: 27px; }
.bar {
  display: flex; align-items: center; padding: 0 0 1px 3px; min-width: 0;
  border: 1px solid #aca899; border-top-color: #fff; border-left-color: #fff;
}
.grip { width: 3px; height: 20px; flex: none; border: 1px solid #fff; border-right-color: #aca899; border-bottom-color: #aca899; }
.sep { width: 2px; height: 22px; margin: 0 2px; flex: none; border-left: 1px solid #aca899; border-right: 1px solid #fff; }
.tb {
  height: 23px; display: flex; align-items: center; gap: 4px; flex: none; white-space: nowrap;
  padding: 0 3px 0 2px; border: 1px solid transparent;
}
.tb.on { background: #f8f7f2; border-color: #9c9a8c #fff #fff #9c9a8c; }
.tb:disabled { color: #aca899; text-shadow: 1px 1px #fff; }
.caret { width: 7px; height: 4px; flex: none; margin-left: 1px; background: #000; clip-path: polygon(0 0, 100% 0, 50% 100%); }
.tb:disabled .caret { background: #aca899; }
.view { background: #fff; }
.more { margin: 0 4px 8px auto; font-size: 15px; line-height: 14px; }
.sigma { font: bold 15px/16px "Liberation Serif", serif; text-align: center; }
.bar-file { flex: 0 0 153px; }
.bar-file .tb { gap: 1px; padding: 0 2px; }
.bar-main { flex: 0 0 648px; }
.bar-comp { flex: 0 0 640px; }
.bar-draw { flex: 0 0 687px; }
.bar-rest { flex: 1; }

.combo { position: relative; width: 69px; height: 20px; flex: none; margin-left: 3px; }
.combo::after {
  content: ""; position: absolute; right: 4px; top: 8px; width: 7px; height: 4px; background: #000;
  clip-path: polygon(0 0, 100% 0, 50% 100%); pointer-events: none;
}
.combo select {
  appearance: none; width: 100%; height: 20px; border: 0; border-radius: 0; padding: 0 14px 0 2px;
  background: linear-gradient(90deg, #fff calc(100% - 13px), #ece9d8 0); opacity: 1;
}
.combo.c-s { width: 58px; }
.combo.mono select { font: 10px/16px "DejaVu Sans Mono", monospace; }
.combo.off { width: 54px; }
.combo.off select { background: none; border: 1px solid #fff; }
.combo.off::after { background: #aca899; }
.bar-comp .sep { margin: 0 2px; }
.pick { margin-right: 4px; }

.middle { flex: 1; min-height: 0; display: flex; gap: 5px; }
.side { flex: 0 0 165px; display: flex; flex-direction: column; padding-top: 2px; }
.side-head { height: 15px; flex: none; display: flex; align-items: center; gap: 8px; padding-right: 4px; background: #0a5be6; color: #fff; }
.side-head h2 { flex: 1; line-height: 15px; font-size: 13px; }
.side-head svg { width: 9px; height: 9px; display: block; }
.side-body {
  flex: 1; min-height: 0; margin: 2px 1px 1px 0; padding: 3px; display: flex; flex-direction: column;
  border: 2px solid #9ba3ac; outline: 1px solid #fff; outline-offset: -4px;
}
.tab { height: 22px; flex: none; border: 1px solid #aca899; border-top-color: #fff; border-left-color: #fff; background: #ece9d8; }
.side-tools { height: 27px; flex: none; display: flex; align-items: center; gap: 7px; padding-left: 6px; border-top: 1px solid #aca899; }
.side-tools svg { width: 16px; height: 16px; display: block; }
.tree { flex: 1; min-height: 0; margin: 0 0 1px 1px; padding: 1px 0 0 8px; background: #fff; border: 1px solid #7f9db9; overflow: hidden; }
.tree > li { background: linear-gradient(#b8b8b8, #b8b8b8) 4px 0 / 1px 100% no-repeat; }
.tree > li:first-child { background-position: 4px 8px; }
.tree > li:last-child { background-size: 1px 8px; }
.row { height: 16px; display: flex; align-items: center; gap: 5px; white-space: nowrap; }
.ex {
  width: 9px; height: 9px; margin-right: 1px; flex: none; border: 1px solid #7f8fa6; background: #fff;
  font: bold 9px/7px "DejaVu Sans Mono", monospace; text-align: center;
}
.tree ul { padding-left: 35px; background: linear-gradient(#b8b8b8, #b8b8b8) 23px 0 / 1px calc(100% - 8px) no-repeat; }
.tree ul li { position: relative; height: 16px; display: flex; align-items: center; gap: 2px; white-space: nowrap; }
.tree ul li::before { content: ""; position: absolute; left: -11px; top: 8px; width: 10px; border-top: 1px dotted #a0a0a0; }
.tree ul li > span { padding: 0 2px; line-height: 15px; }
.tree .k { line-height: 14px; }
.tree .sel { background: #ece9d8; padding-right: 5px; }

.work { flex: 1; min-width: 0; display: flex; flex-direction: column; }
.canvas { position: relative; flex: 1; min-height: 0; background: #000; overflow: hidden; }
.drawing { display: block; width: 100%; height: 100%; }
.axis path { stroke: #d81818; fill: none; }
.grid { stroke: #b8b0b0; stroke-opacity: .8; fill: none; }
.rebar { stroke: #ffff20; stroke-width: 2; fill: none; }
.orbit circle { fill: none; stroke: #a0a0a0; stroke-opacity: .8; }
.bubble circle { fill: none; stroke: #1c7c1c; }
.axname { font: 300 18px "Roboto", sans-serif; fill: #fff; }
.note { font: 100 64px "Lato", sans-serif; fill: #fff; stroke: #fff; stroke-width: .3px; }
.at { font-size: 44px; }
.ucs { font: 300 15px "Roboto", sans-serif; }

.palette { position: absolute; left: 2px; top: 2px; width: 174px; height: 173px; padding: 4px; display: flex; flex-direction: column; background: #7b83dd; border: 1px solid #5a62c0; }
.palette h3 { height: 18px; line-height: 16px; font-size: 13px; font-weight: bold; color: #dfe6ff; }
.palette-body { flex: 1; padding: 1px 3px; background: #fff; border: 1px solid #8c94a8; }
.palette label { display: flex; align-items: center; gap: 4px; height: 12px; line-height: 12px; }
input[type="checkbox"] { appearance: none; width: 11px; height: 11px; flex: none; border: 1px solid #8a9c8a; background: #fff; }
input[type="checkbox"]:checked { position: relative; }
input[type="checkbox"]:checked::after { content: ""; position: absolute; left: 3px; top: 0; width: 3px; height: 6px; border: solid #21a121; border-width: 0 2px 2px 0; transform: rotate(45deg); }

.snapbar { height: 27px; }
.num { color: #aca899; font: 10px/16px "DejaVu Sans Mono", monospace; text-shadow: 1px 1px #fff; margin: 0 2px; }
.unit { margin-right: 7px; }
.spin { position: relative; width: 55px; height: 19px; flex: none; border: 1px solid #fff; }
.spin input { width: 100%; height: 17px; padding: 0 16px 0 0; border: 0; background: none; text-align: right; color: #aca899; font: 10px/16px "DejaVu Sans Mono", monospace; }
.spin::before, .spin::after { content: ""; position: absolute; right: 2px; width: 6px; height: 3px; background: #aca899; }
.spin::before { top: 3px; clip-path: polygon(0 100%, 50% 0, 100% 100%); }
.spin::after { bottom: 3px; clip-path: polygon(0 0, 100% 0, 50% 100%); }
.spin.wide { width: 65px; margin-left: 6px; }
.deg { margin-right: 8px; }
.rot { display: flex; align-items: center; gap: 9px; margin-left: 4px; }

.status { height: 22px; flex: none; display: flex; gap: 2px; }
.status > span { display: block; padding: 2px 1px; white-space: nowrap; border: 1px solid #fff; border-top-color: #aca899; border-left-color: #aca899; }
.status .s1 { flex: 0 0 148px; border-left: 0; }
.status .s2 { flex: 0 0 78px; }
.status .s3 { flex: 0 0 99px; }
.status .s4 { flex: 0 0 48px; }
.status .s5 { flex: 1; }
.status .s6 { flex: 0 0 70px; }

.taskbar {
  height: 30px; flex: none; display: flex; align-items: stretch; color: #fff;
  background: linear-gradient(#2a68e0 0, #4a90f8 2px, #2860e0 6px, #245edb 24px, #1c48b0 30px);
}
.start {
  width: 97px; display: flex; align-items: center; gap: 5px; padding-left: 10px; border-radius: 0 10px 10px 0;
  background: linear-gradient(#58a858 0, #3c963c 5px, #389438 22px, #246824 30px);
  font-size: 19px; font-style: italic; text-shadow: 1px 1px 1px #1c4c1c;
}
.start svg { width: 20px; height: 20px; }
.quick { flex: 0 0 101px; display: flex; align-items: center; gap: 7px; padding-left: 12px; }
.chev { font-size: 15px; margin: 0 0 10px 4px; color: #a8ccff; }
.task {
  flex: 0 1 158px; height: 25px; margin: 2px 1px 0; display: flex; align-items: center; gap: 4px; padding-left: 9px;
  white-space: nowrap; border-radius: 2px; background: linear-gradient(#5a9cfc, #3c80f4 5px, #3878ec 22px, #2c68d8);
}
.task.active { background: linear-gradient(#14389c, #1c4cb8 5px, #1e50bc); }
.lang { margin-left: auto; display: flex; align-items: center; }
.pc { margin: 0 4px 0 16px; color: #8cb8f8; }
.tray {
  width: 94px; margin-left: 16px; display: flex; align-items: center; gap: 4px; padding-left: 9px;
  border-left: 1px solid #0c3c94; background: linear-gradient(#18b8f8 0, #16a0f0 5px, #1290e8 24px, #0c78c8 30px);
}
.tray time { margin-left: 2px; }
```
